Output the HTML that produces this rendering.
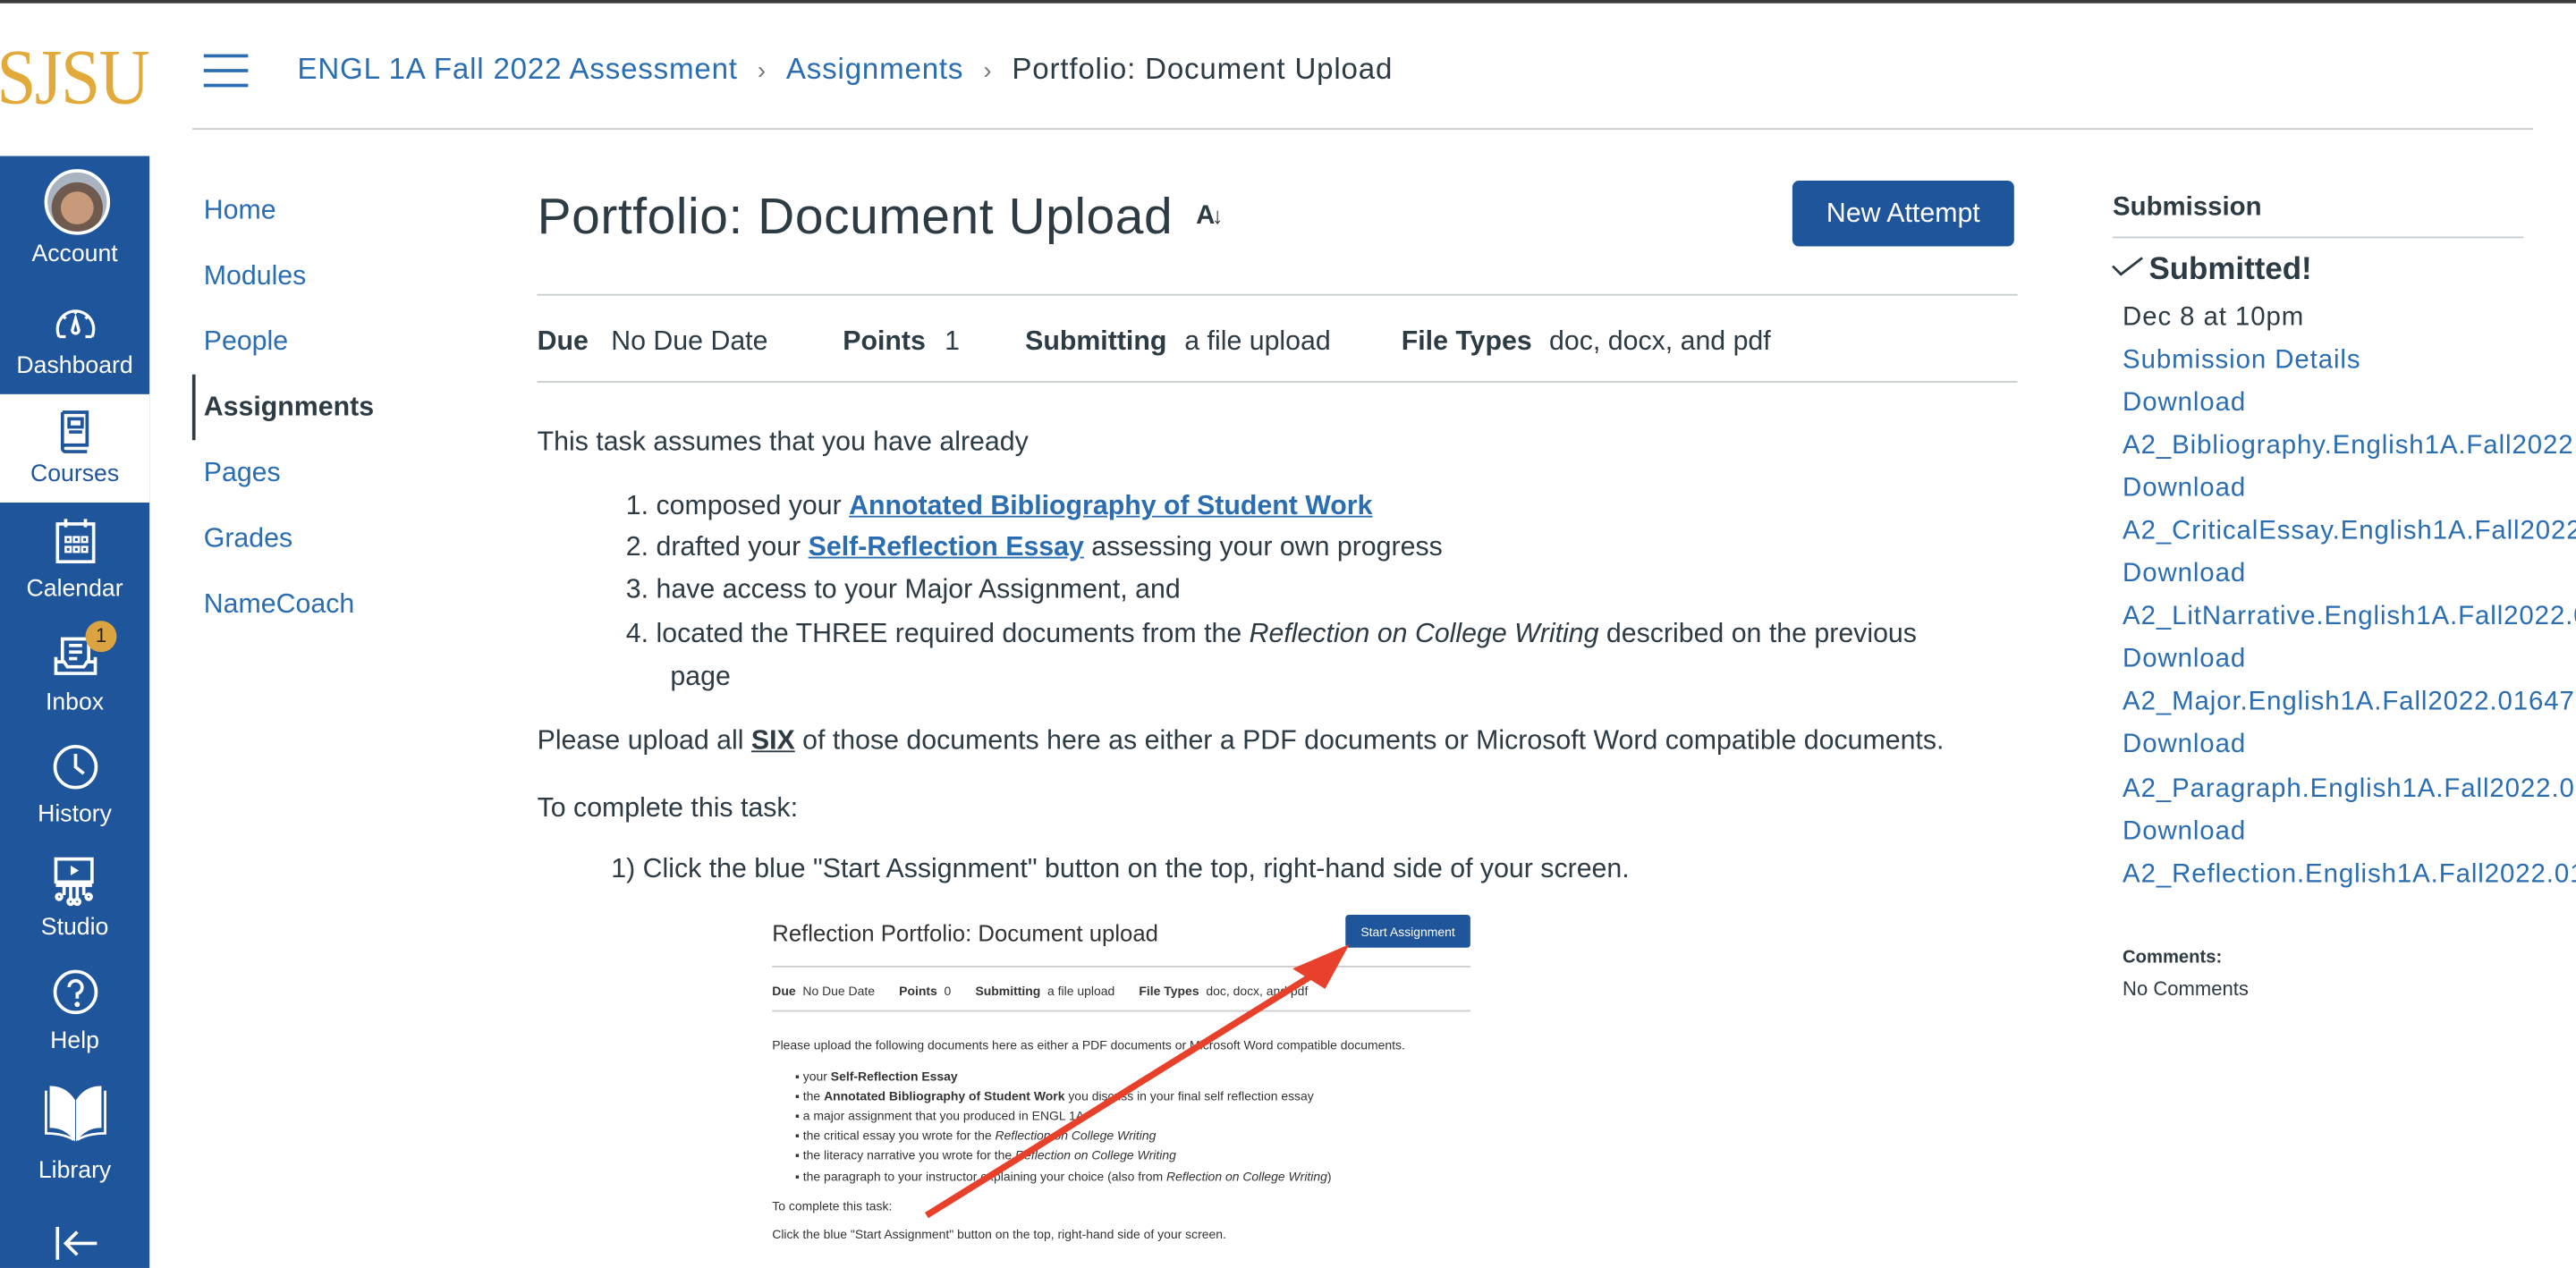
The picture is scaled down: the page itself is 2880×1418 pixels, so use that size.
<!DOCTYPE html>
<html><head><meta charset="utf-8">
<style>
html,body{margin:0;padding:0;background:#fff;width:2880px;height:1418px;overflow:hidden}
#w{position:absolute;left:0;top:0;width:1568px;height:772px;transform:scale(1.83673);transform-origin:0 0;font-family:"Liberation Sans",sans-serif;color:#2d3b45;overflow:hidden}
.a{position:absolute;white-space:nowrap}
.lk{color:#2a6db0}
.nav{position:absolute;left:0;width:91px;text-align:center;color:#fff;font-size:14.5px}
.cn{position:absolute;left:124px;font-size:16.5px;color:#2a6db0}
.ri{position:absolute;left:1292px;font-size:16px;color:#2a6db0;white-space:nowrap;letter-spacing:0.5px}
.e{position:absolute;white-space:nowrap;font-size:7.6px;color:#333}
.m{font-size:16.5px}
</style></head><body><div id="w">
<div class="a" style="left:0;top:0;width:1568px;height:2px;background:#3a3a3a"></div>
<div class="a" style="left:-2px;top:20px;font-family:'Liberation Serif',serif;font-size:48px;color:#e2a93b;transform:scaleX(0.9);transform-origin:0 0;letter-spacing:-1px">SJSU</div>
<div class="a" style="left:124px;top:33px;width:27px;height:2px;background:#2a6db0;box-shadow:0 9px 0 #2a6db0,0 18px 0 #2a6db0"></div>
<div class="a" style="left:181px;top:32px;font-size:18px;letter-spacing:0.45px"><span class="lk">ENGL 1A Fall 2022 Assessment</span><span style="color:#777;margin:0 12px;font-size:15px">›</span><span class="lk">Assignments</span><span style="color:#777;margin:0 12px;font-size:15px">›</span><span>Portfolio: Document Upload</span></div>
<div class="a" style="left:117px;top:78px;width:1425px;height:1px;background:#c7cdd1"></div>

<div class="a" style="left:0;top:95px;width:91px;height:677px;background:#1f559b"></div>
<div class="a" style="left:0;top:240px;width:91px;height:66px;background:#fff"></div>
<div class="a" style="left:27px;top:103px;width:36px;height:36px;border-radius:50%;border:2px solid #fff;background:radial-gradient(circle at 50% 60%,#c89a7a 0 35%,#6e5a4e 36% 55%,#a9b4c0 56%)"></div>
<div class="nav" style="top:147px">Account</div>
<svg class="a" style="left:33px;top:185px" width="26" height="22" viewBox="0 0 26 22" fill="none" stroke="#fff" stroke-width="1.8"><path d="M3 20 A11 11 0 1 1 23 20 M3 20h4 M19 20h4 M13 9 l2 7 a2 2 0 1 1-4 0z M6 8l1 1 M13 5v1 M20 8l-1 1"/></svg>
<div class="nav" style="top:215px">Dashboard</div>
<svg class="a" style="left:35px;top:249px" width="20" height="28" viewBox="0 0 20 28" fill="none" stroke="#1f559b" stroke-width="2"><path d="M3 2h15v20H5a2 2 0 0 0 0 4h13 M3 2v22 M7 6h8v5H7z M7 14h8"/></svg>
<div class="nav" style="top:281px;color:#1f559b">Courses</div>
<svg class="a" style="left:34px;top:315px" width="24" height="28" viewBox="0 0 24 28" fill="none" stroke="#fff" stroke-width="2"><path d="M1 4h22v23H1z M6 1v5 M18 1v5"/><path d="M6 12h3v3H6zM11 12h3v3h-3zM16 12h3v3h-3zM6 18h3v3H6zM11 18h3v3h-3zM16 18h3v3h-3z" stroke-width="1.4"/></svg>
<div class="nav" style="top:351px">Calendar</div>
<svg class="a" style="left:32px;top:385px" width="28" height="28" viewBox="0 0 28 28" fill="none" stroke="#fff" stroke-width="2"><path d="M6 18V4h16v14 M10 8h8 M10 12h8 M10 16h5 M2 15v10h24V15 M2 18h5l2 3h10l2-3h5"/></svg>
<div class="a" style="left:52px;top:378px;width:19px;height:19px;border-radius:50%;background:#dca441;color:#222;font-size:12px;text-align:center;line-height:19px">1</div>
<div class="nav" style="top:420px">Inbox</div>
<svg class="a" style="left:32px;top:453px" width="28" height="28" viewBox="0 0 28 28" fill="none" stroke="#fff" stroke-width="2"><circle cx="14" cy="14" r="12.5"/><path d="M14 6v8l5 4"/></svg>
<div class="nav" style="top:488px">History</div>
<svg class="a" style="left:31px;top:521px" width="30" height="32" viewBox="0 0 30 32" fill="none" stroke="#fff" stroke-width="2"><path d="M3 2h22v14H3z M3 18h22 M8 18v6 M12 18v8 M16 18v8 M20 18v6"/><path d="M12 6l5 3-5 3z" fill="#fff" stroke="none"/><circle cx="5" cy="25" r="1.6"/><circle cx="12" cy="28" r="1.6"/><circle cx="16" cy="28" r="1.6"/><circle cx="23" cy="25" r="1.6"/></svg>
<div class="nav" style="top:557px">Studio</div>
<svg class="a" style="left:32px;top:590px" width="28" height="28" viewBox="0 0 28 28" fill="none" stroke="#fff" stroke-width="2"><circle cx="14" cy="14" r="12.5"/><path d="M10 11a4 4 0 1 1 5 4v3"/><circle cx="15" cy="21.5" r="0.6" fill="#fff"/></svg>
<div class="nav" style="top:626px">Help</div>
<svg class="a" style="left:26px;top:659px" width="40" height="36" viewBox="0 0 40 36" fill="#fff" stroke="#fff" stroke-width="1.5"><path d="M19 34C14 28 9 27 5 27V3c5 0 10 2 14 8z M21 34c5-6 10-7 14-7V3c-5 0-10 2-14 8z"/><path d="M2 5v26c6 0 12 1 17 4 M38 5v26c-6 0-12 1-17 4" fill="none"/></svg>
<div class="nav" style="top:705px">Library</div>
<svg class="a" style="left:33px;top:746px" width="28" height="22" viewBox="0 0 28 22" fill="none" stroke="#fff" stroke-width="2"><path d="M2 1v20 M26 11H7 M14 4l-7 7 7 7"/></svg>

<div class="cn" style="top:119px">Home</div>
<div class="cn" style="top:159px">Modules</div>
<div class="cn" style="top:199px">People</div>
<div class="a" style="left:117px;top:228px;width:2px;height:40px;background:#2d3b45"></div>
<div class="cn" style="top:239px;color:#2d3b45;font-weight:bold">Assignments</div>
<div class="cn" style="top:279px">Pages</div>
<div class="cn" style="top:319px">Grades</div>
<div class="cn" style="top:359px">NameCoach</div>

<div class="a" style="left:327px;top:114px;font-size:31px;letter-spacing:0.3px">Portfolio: Document Upload</div>
<div class="a" style="left:728px;top:123px;font-size:16px;font-weight:bold">A<span style="font-size:14px;margin-left:-2px">&#8595;</span></div>
<div class="a" style="left:1091px;top:110px;width:135px;height:40px;background:#1f559b;border-radius:4px;color:#fff;font-size:16.5px;text-align:center;line-height:41px">New Attempt</div>
<div class="a" style="left:327px;top:179px;width:901px;height:1px;background:#c7cdd1"></div>
<div class="a m" style="left:327px;top:199px"><b>Due</b></div>
<div class="a m" style="left:372px;top:199px">No Due Date</div>
<div class="a m" style="left:513px;top:199px"><b>Points</b></div>
<div class="a m" style="left:575px;top:199px">1</div>
<div class="a m" style="left:624px;top:199px"><b>Submitting</b></div>
<div class="a m" style="left:721px;top:199px">a file upload</div>
<div class="a m" style="left:853px;top:199px"><b>File Types</b></div>
<div class="a m" style="left:943px;top:199px">doc, docx, and pdf</div>
<div class="a" style="left:327px;top:232px;width:901px;height:1px;background:#c7cdd1"></div>

<div class="a m" style="left:327px;top:260px">This task assumes that you have already</div>
<div class="a m" style="left:381px;top:299px">1. composed your <a class="lk" style="font-weight:bold;text-decoration:underline">Annotated Bibliography of Student Work</a></div>
<div class="a m" style="left:381px;top:324px">2. drafted your <a class="lk" style="font-weight:bold;text-decoration:underline">Self-Reflection Essay</a> assessing your own progress</div>
<div class="a m" style="left:381px;top:350px">3. have access to your Major Assignment, and</div>
<div class="a m" style="left:381px;top:377px">4. located the THREE required documents from the <i>Reflection on College Writing</i> described on the previous</div>
<div class="a m" style="left:408px;top:403px">page</div>
<div class="a m" style="left:327px;top:442px">Please upload all <b style="text-decoration:underline">SIX</b> of those documents here as either a PDF documents or Microsoft Word compatible documents.</div>
<div class="a m" style="left:327px;top:483px">To complete this task:</div>
<div class="a m" style="left:372px;top:520px">1) Click the blue "Start Assignment" button on the top, right-hand side of your screen.</div>

<div class="a" style="left:470px;top:560px;font-size:14px;color:#333">Reflection Portfolio: Document upload</div>
<div class="a" style="left:819px;top:557px;width:76px;height:20px;background:#1f559b;border-radius:2px;color:#fff;font-size:7.6px;text-align:center;line-height:21px">Start Assignment</div>
<div class="a" style="left:470px;top:588px;width:425px;height:1px;background:#ccc"></div>
<div class="e" style="left:470px;top:599px"><b>Due</b>&nbsp;&nbsp;No Due Date&nbsp;&nbsp;&nbsp;&nbsp;&nbsp;&nbsp;&nbsp;<b>Points</b>&nbsp;&nbsp;0&nbsp;&nbsp;&nbsp;&nbsp;&nbsp;&nbsp;&nbsp;<b>Submitting</b>&nbsp;&nbsp;a file upload&nbsp;&nbsp;&nbsp;&nbsp;&nbsp;&nbsp;&nbsp;<b>File Types</b>&nbsp;&nbsp;doc, docx, and pdf</div>
<div class="a" style="left:470px;top:615px;width:425px;height:1px;background:#ccc"></div>
<div class="e" style="left:470px;top:632px">Please upload the following documents here as either a PDF documents or Microsoft Word compatible documents.</div>
<div class="e" style="left:484px;top:651px">▪ your <b>Self-Reflection Essay</b></div>
<div class="e" style="left:484px;top:663px">▪ the <b>Annotated Bibliography of Student Work</b> you discuss in your final self reflection essay</div>
<div class="e" style="left:484px;top:675px">▪ a major assignment that you produced in ENGL 1A</div>
<div class="e" style="left:484px;top:687px">▪ the critical essay you wrote for the <i>Reflection on College Writing</i></div>
<div class="e" style="left:484px;top:699px">▪ the literacy narrative you wrote for the <i>Reflection on College Writing</i></div>
<div class="e" style="left:484px;top:712px">▪ the paragraph to your instructor explaining your choice (also from <i>Reflection on College Writing</i>)</div>
<div class="e" style="left:470px;top:730px">To complete this task:</div>
<div class="e" style="left:470px;top:747px">Click the blue "Start Assignment" button on the top, right-hand side of your screen.</div>
<svg class="a" style="left:0;top:0" width="1568" height="772"><path d="M564 740 L805 590" stroke="#e8412b" stroke-width="4"/><path d="M818 578 L790 590 L806 600 Z" fill="#e8412b" stroke="#e8412b" stroke-width="3"/></svg>

<div class="a" style="left:1286px;top:118px;font-size:16px;font-weight:bold">Submission</div>
<div class="a" style="left:1286px;top:144px;width:250px;height:1px;background:#c7cdd1"></div>
<svg class="a" style="left:1285px;top:155px" width="20" height="14" viewBox="0 0 20 14" fill="none" stroke="#2d3b45" stroke-width="1.5"><path d="M1 7l5 5L19 2"/></svg>
<div class="a" style="left:1308px;top:154px;font-size:19px;font-weight:bold">Submitted!</div>
<div class="a" style="left:1292px;top:185px;font-size:16px;letter-spacing:0.5px">Dec 8 at 10pm</div>
<div class="ri" style="top:211px">Submission Details</div>
<div class="ri" style="top:237px">Download</div>
<div class="ri" style="top:263px">A2_Bibliography.English1A.Fall2022.0</div>
<div class="ri" style="top:289px">Download</div>
<div class="ri" style="top:315px">A2_CriticalEssay.English1A.Fall2022.0</div>
<div class="ri" style="top:341px">Download</div>
<div class="ri" style="top:367px">A2_LitNarrative.English1A.Fall2022.01</div>
<div class="ri" style="top:393px">Download</div>
<div class="ri" style="top:419px">A2_Major.English1A.Fall2022.01647</div>
<div class="ri" style="top:445px">Download</div>
<div class="ri" style="top:472px">A2_Paragraph.English1A.Fall2022.01</div>
<div class="ri" style="top:498px">Download</div>
<div class="ri" style="top:524px">A2_Reflection.English1A.Fall2022.01</div>
<div class="a" style="left:1292px;top:577px;font-size:11px;font-weight:bold">Comments:</div>
<div class="a" style="left:1292px;top:595px;font-size:12px">No Comments</div>
</div></body></html>
